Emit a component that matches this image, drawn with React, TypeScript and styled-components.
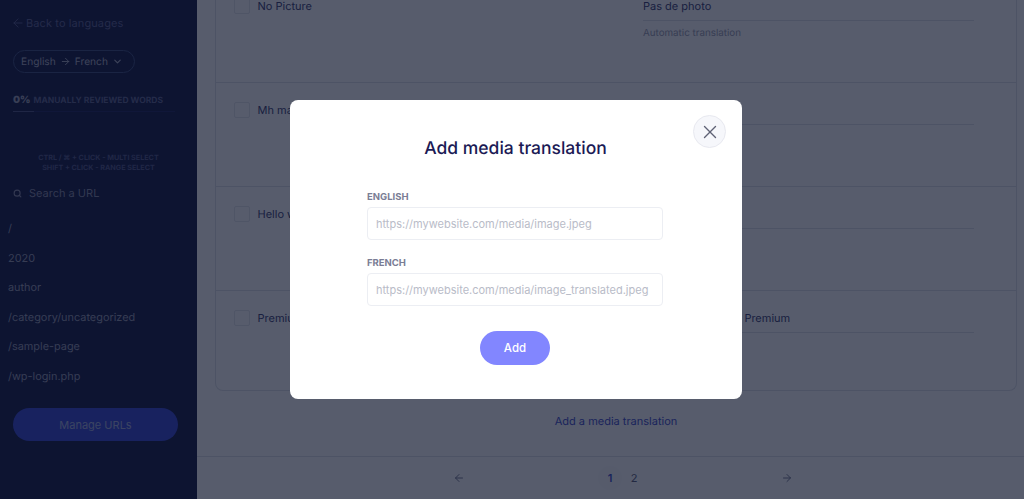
import React from 'react';
import styled, { createGlobalStyle } from 'styled-components';
import { ArrowLeft, ArrowRight, ChevronDown, Search, X } from 'lucide-react';

const colors = {
  navy: '#2a2d66',
  title: '#1b1a55',
  blue: '#2f3bc4',
  violet: '#8286ff',
  line: '#d6d9e3',
  gray: '#7a7d95',
};

const GlobalStyle = createGlobalStyle`
  html, body {
    margin: 0;
    height: 100%;
    overflow: hidden;
    font-family: Inter, 'Liberation Sans', sans-serif;
    text-rendering: geometricPrecision;
  }
  * {
    box-sizing: border-box;
  }
`;

const Page = styled.div`
  display: flex;
  height: 499px;
  background: #f7f8fb;
`;

const Sidebar = styled.aside`
  width: 197px;
  flex-shrink: 0;
  background: #000738;
  color: #fff;
  padding-top: 16px;
`;

const BackLink = styled.div`
  display: flex;
  align-items: center;
  gap: 1.5px;
  height: 14px;
  margin-left: 10.5px;
  font-size: 11px;
  letter-spacing: 0.1px;
  color: #4d5288;
`;

const LangPill = styled.div`
  display: flex;
  align-items: center;
  justify-content: center;
  gap: 4px;
  width: 122px;
  height: 23px;
  margin: 20px 0 0 13px;
  padding-right: 4px;
  border: 1px solid #2c3d72;
  border-radius: 12px;
  font-size: 10.2px;
  color: #a0a4bc;
`;

const Progress = styled.div`
  margin: 21px 22px 0 13px;
`;

const ProgressLabel = styled.div`
  display: flex;
  align-items: baseline;
  gap: 3px;
  font-size: 8.5px;
  font-weight: 700;
  color: #4f5686;

  b {
    font-size: 10px;
    color: #8f93ad;
  }
`;

const ProgressTrack = styled.div`
  height: 1px;
  margin-top: 5px;
  background: #0d1250;
`;

const ProgressFill = styled.div`
  height: 100%;
  background: #3f4578;
`;

const Hint = styled.div`
  margin-top: 41px;
  text-align: center;
  font-size: 7.2px;
  line-height: 10px;
  font-weight: 700;
  color: #40467c;
`;

const SearchBox = styled.div`
  display: flex;
  align-items: center;
  gap: 7px;
  margin: 12px 0 0 13px;
  height: 16px;
  font-size: 11px;
  color: #7d7f9e;
`;

const UrlList = styled.ul`
  list-style: none;
  margin: 13px 0 0;
  padding: 0 0 0 8px;
`;

const UrlItem = styled.li`
  height: 29.5px;
  line-height: 29.5px;
  font-size: 10.9px;
  color: #8a8ea8;
`;

const ManageButton = styled.button`
  display: block;
  width: 165px;
  height: 33px;
  margin: 17px 0 0 13px;
  border: 0;
  border-radius: 17px;
  background: #2738d0;
  color: #9aa5da;
  font: inherit;
  font-size: 11px;
`;

const Main = styled.main`
  flex: 1;
  min-width: 0;
  display: flex;
  flex-direction: column;
`;

const Content = styled.div`
  height: 457px;
  padding-left: 18px;
  padding-right: 7px;
  border-bottom: 1px solid ${colors.line};
`;

const Card = styled.section`
  height: 393px;
  border: 1px solid ${colors.line};
  border-top: 0;
  border-radius: 0 0 8px 8px;
  background: #f8f9fc;
`;

const Row = styled.div<{ $first?: boolean }>`
  display: flex;
  height: ${(p) => (p.$first ? '85px' : '104px')};
  padding: ${(p) => (p.$first ? '0' : '19px')} 42px 0 18px;
  margin-top: ${(p) => (p.$first ? '-2px' : '0')};
  border-bottom: 1px solid ${colors.line};

  &:last-child {
    border-bottom: 0;
  }
`;

const Checkbox = styled.span`
  width: 16px;
  height: 16px;
  flex-shrink: 0;
  border: 1px solid #dcdfe8;
  border-radius: 2px;
`;

const Source = styled.div`
  width: 393px;
  padding-left: 7.5px;
  font-size: 11px;
  line-height: 16px;
  color: ${colors.navy};
`;

const Target = styled.div`
  flex: 1;
  font-size: 11px;
  line-height: 16px;
  color: ${colors.navy};
`;

const TargetText = styled.div`
  height: 23px;
  border-bottom: 1px solid ${colors.line};
`;

const TargetNote = styled.div`
  margin-top: 6px;
  font-size: 9.8px;
  line-height: 14px;
  color: #8d90a8;
`;

const AddLink = styled.div`
  margin-top: 23px;
  text-align: center;
  font-size: 11px;
  color: ${colors.blue};
`;

const Footer = styled.footer`
  flex: 1;
  display: flex;
  align-items: center;
  justify-content: space-between;
  width: 340px;
  margin-left: 256px;
  color: #6b6f8c;
`;

const Pages = styled.div`
  display: flex;
  align-items: center;
  margin-left: -2px;
`;

const PageNumber = styled.span<{ $active?: boolean }>`
  display: flex;
  align-items: center;
  justify-content: center;
  width: 24px;
  height: 24px;
  border-radius: 50%;
  font-size: 11px;
  font-weight: ${(p) => (p.$active ? 600 : 400)};
  color: ${(p) => (p.$active ? colors.blue : '#4a4d6e')};
  background: ${(p) => (p.$active ? '#f4f5f9' : 'transparent')};
`;

const Overlay = styled.div`
  position: fixed;
  inset: 0;
  display: flex;
  align-items: flex-start;
  justify-content: flex-start;
  padding: 100px 0 0 290px;
  background: rgba(18, 26, 47, 0.7);
  backdrop-filter: blur(0.6px);
`;

const Modal = styled.div`
  position: relative;
  display: flex;
  flex-direction: column;
  align-items: center;
  width: 452px;
  height: 299px;
  padding-top: 37px;
  border-radius: 8px;
  background: #fff;
`;

const CloseButton = styled.button`
  position: absolute;
  top: 15px;
  right: 16px;
  display: flex;
  align-items: center;
  justify-content: center;
  width: 33px;
  height: 33px;
  padding: 0;
  border: 1px solid #e8e9f0;
  border-radius: 50%;
  background: #f6f7fb;
  color: #5f6275;
`;

const Title = styled.h2`
  margin: 0 1px 31px 0;
  font-size: 17.5px;
  line-height: 23px;
  font-weight: 500;
  color: ${colors.title};
`;

const Field = styled.div`
  width: 296px;
  margin: 0 2px 17px 0;
`;

const Label = styled.div`
  height: 14px;
  margin-bottom: 2px;
  font-size: 9.5px;
  line-height: 14px;
  font-weight: 700;
  color: ${colors.gray};
`;

const Input = styled.input`
  display: block;
  width: 100%;
  height: 33px;
  padding: 0 8px;
  border: 1px solid #eceef3;
  border-radius: 4px;
  font: inherit;
  font-size: 11px;

  &::placeholder {
    color: #b9bcc8;
    opacity: 1;
  }
`;

const AddButton = styled.button`
  width: 70px;
  height: 34px;
  margin: 8px 2px 0 0;
  border: 0;
  border-radius: 17px;
  background: ${colors.violet};
  color: #fff;
  font: inherit;
  font-size: 11.5px;
  font-weight: 500;
`;

const urls = ['/', '2020', 'author', '/category/uncategorized', '/sample-page', '/wp-login.php'];

const rows = [
  { source: 'No Picture', target: 'Pas de photo', note: 'Automatic translation' },
  { source: 'Mh maybe', target: 'Mh peut-être', note: '' },
  { source: 'Hello world', target: 'Bonjour le monde', note: '' },
  { source: 'Premium', target: 'Formule mensuelle Premium', note: '' },
];

export default function App() {
  return (
    <>
      <GlobalStyle />
      <Page>
        <Sidebar>
          <BackLink>
            <ArrowLeft size={14} strokeWidth={1.5} />
            Back to languages
          </BackLink>
          <LangPill>
            English <ArrowRight size={11} /> French <ChevronDown size={11} strokeWidth={2.5} />
          </LangPill>
          <Progress>
            <ProgressLabel>
              <b>0%</b> MANUALLY REVIEWED WORDS
            </ProgressLabel>
            <ProgressTrack>
              <ProgressFill style={{ width: '13%' }} />
            </ProgressTrack>
          </Progress>
          <Hint>
            CTRL / ⌘ + CLICK - MULTI SELECT
            <br />
            SHIFT + CLICK - RANGE SELECT
          </Hint>
          <SearchBox>
            <Search size={9} strokeWidth={3} />
            Search a URL
          </SearchBox>
          <UrlList>
            {urls.map((url) => (
              <UrlItem key={url}>{url}</UrlItem>
            ))}
          </UrlList>
          <ManageButton>Manage URLs</ManageButton>
        </Sidebar>
        <Main>
          <Content>
            <Card>
              {rows.map((row, i) => (
                <Row key={row.source} $first={i === 0}>
                  <Checkbox />
                  <Source>{row.source}</Source>
                  <Target>
                    <TargetText>{row.target}</TargetText>
                    {row.note && <TargetNote>{row.note}</TargetNote>}
                  </Target>
                </Row>
              ))}
            </Card>
            <AddLink>Add a media translation</AddLink>
          </Content>
          <Footer>
            <ArrowLeft size={12} />
            <Pages>
              <PageNumber $active>1</PageNumber>
              <PageNumber>2</PageNumber>
            </Pages>
            <ArrowRight size={12} />
          </Footer>
        </Main>
      </Page>
      <Overlay>
        <Modal>
          <CloseButton>
            <X size={22} strokeWidth={1.5} />
          </CloseButton>
          <Title>Add media translation</Title>
          <Field>
            <Label>ENGLISH</Label>
            <Input placeholder="https://mywebsite.com/media/image.jpeg" />
          </Field>
          <Field>
            <Label>FRENCH</Label>
            <Input placeholder="https://mywebsite.com/media/image_translated.jpeg" />
          </Field>
          <AddButton>Add</AddButton>
        </Modal>
      </Overlay>
    </>
  );
}
